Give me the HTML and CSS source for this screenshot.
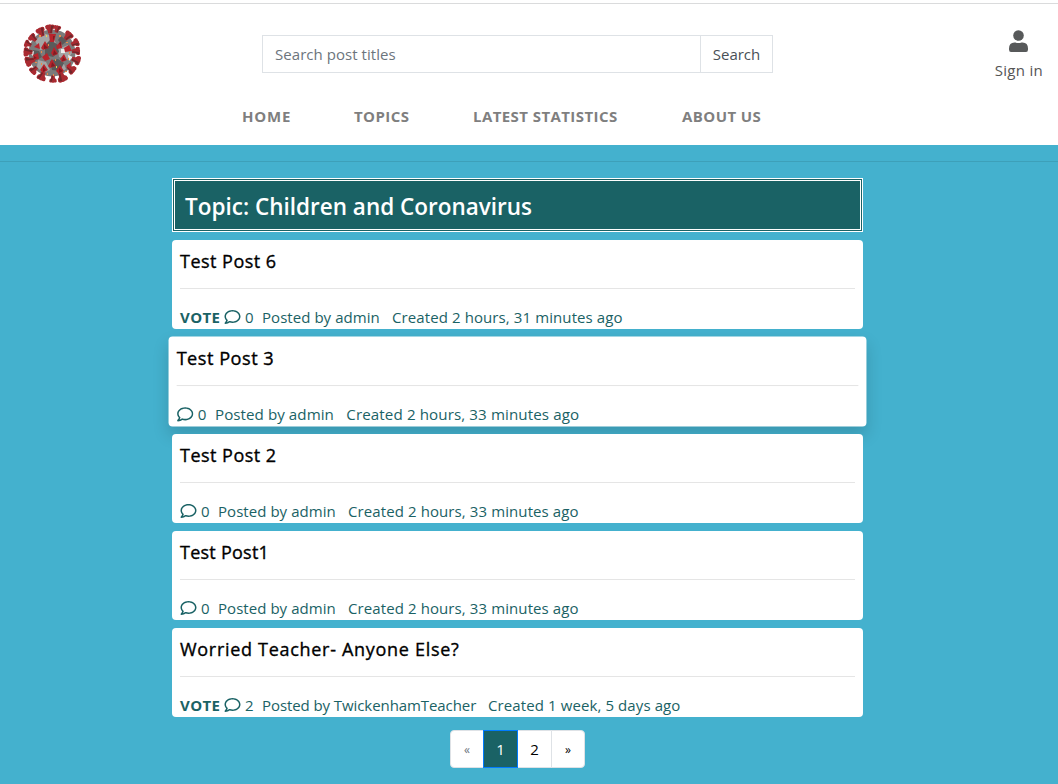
FILE: index.html
```html
<!DOCTYPE html>
<html lang="en">
<head>
<meta charset="utf-8">
<title>Topic: Children and Coronavirus</title>
<link rel="stylesheet" href="styles.css">
</head>
<body>
<svg class="defs" width="0" height="0">
  <symbol id="comment" viewBox="0 0 512 512"><path fill="currentColor" d="M256 32C114.600 32 0 125.100 0 240c0 47.600 19.900 91.200 52.900 126.300C38 405.700 7 439.100 6.500 439.500c-6.600 7-8.400 17.200-4.600 26S14.400 480 24 480c61.500 0 110-25.700 139.100-46.300C192 442.800 223.200 448 256 448c141.400 0 256-93.100 256-208S397.400 32 256 32zm0 368c-26.700 0-53.100-4.100-78.400-12.100l-22.700-7.200-19.500 13.800c-14.300 10.100-33.900 21.400-57.500 29 7.300-12.100 14.400-25.700 19.900-40.200l10.600-28.100-20.600-21.800C69.700 314.100 48 282.200 48 240c0-88.200 93.300-160 208-160s208 71.800 208 160-93.300 160-208 160z"/></symbol>
  <symbol id="spike" viewBox="-5 -5 10 10"><path fill="#a92a31" d="M-4.800-3Q-3.500-5-1.500-4.300 0-5 1.500-4.300 3.500-5 4.800-3L4.300-.5 2.500 1 2 4.500H-2L-2.500 1-4.300-.5z"/><path fill="#70272b" d="M1.300-3.500 4.200-2.800 2.200 0 1.500 4H0z"/></symbol>
</svg>
<header class="site-header">
  <div class="topbar">
    <svg class="logo" viewBox="0 0 60 60">
      <circle cx="30" cy="30" r="23.500" fill="#7b7b7b"/>
      <path fill="#a5a5a5" d="M13 18l8-8 9 3 5 9-8 4-9 1zM36 26l10-4 4 8-5 7-8-3zM16 37l8 2 4 8-7 3-6-6zM34 44l8-3 2 5-6 4z"/>
      <path fill="#5a5a5a" d="M23 22l5-5 7 4 2 8-6 5-8-2zM11 27l6 1 3 6-7 4zM28 38l8-2 6 4-4 8-8-1zM39 13l6 5-5 4-4-5z"/>
      <path fill="#ececec" d="M39 26h4v4h-4zM8 30l4-2-1 5zM46 32l5 2-4 4z"/>
      <g>
        <use href="#spike" x="-5" y="-5" width="10" height="10" transform="translate(28 6) rotate(-3)"/>
        <use href="#spike" x="-4" y="-4" width="8" height="8" transform="translate(35 6) rotate(12)"/>
        <use href="#spike" x="-5" y="-5" width="10" height="10" transform="translate(19 9) rotate(-25)"/>
        <use href="#spike" x="-4.500" y="-4.500" width="9" height="9" transform="translate(11 15) rotate(-50)"/>
        <use href="#spike" x="-4" y="-4" width="8" height="8" transform="translate(6 21) rotate(-68)"/>
        <use href="#spike" x="-5" y="-5" width="10" height="10" transform="translate(6 29) rotate(-87)"/>
        <use href="#spike" x="-5.500" y="-5.500" width="11" height="11" transform="translate(8 38) rotate(-108)"/>
        <use href="#spike" x="-4.500" y="-4.500" width="9" height="9" transform="translate(12 47) rotate(-135)"/>
        <use href="#spike" x="-5" y="-5" width="10" height="10" transform="translate(20 53) rotate(-157)"/>
        <use href="#spike" x="-4" y="-4" width="8" height="8" transform="translate(31 56) rotate(180)"/>
        <use href="#spike" x="-5.500" y="-5.500" width="11" height="11" transform="translate(40 54) rotate(158)"/>
        <use href="#spike" x="-5" y="-5" width="10" height="10" transform="translate(49 46) rotate(130)"/>
        <use href="#spike" x="-5" y="-5" width="10" height="10" transform="translate(54 37) rotate(108)"/>
        <use href="#spike" x="-4.500" y="-4.500" width="9" height="9" transform="translate(54 28) rotate(87)"/>
        <use href="#spike" x="-4.500" y="-4.500" width="9" height="9" transform="translate(53 20) rotate(65)"/>
        <use href="#spike" x="-5" y="-5" width="10" height="10" transform="translate(46 13) rotate(42)"/>
      </g>
      <g fill="#b8242c">
        <path d="M27 11h7l-2 8h-4zM34 23l5-5 1 7-5 1zM19 25l4-7 4 7-6 2zM42 25l5-3 3 6-7 1zM29 30l3-6 4 7-5 2zM20 34l5-4 3 6-5 2zM38 36l4-5 3 6-5 2zM26 43l4-7 4 7-6 2zM34 48l4-6 4 6-5 3zM18 47l4-6 4 6-5 3zM11 32l5-2 1 6-5 1zM12 24l5-4 1 6zM44 43l5-4-1 7z"/>
      </g>
      <g fill="#7d1d23"><path d="M31 13h2l-2 5zM37 20l2-1v5zM22 21l4 4-4 1zM32 27l3 4-4 1zM41 34l3 3-4 1zM30 39l3 4-4 1zM37 45l4 3-4 2zM21 43l3 4-3 2zM12 33l3 2-3 1z"/></g>
      <g fill="#ef8a45"><path d="M17 12h2v2h-2zM37 12h2v2h-2zM26 21h1v2h-1zM19 28h1v2h-1zM44 19h2v1h-2zM47 29h1v2h-1zM13 39h2v1h-2zM25 50h1v2h-1zM33 36h1v2h-1zM46 35h1v2h-1zM43 48h2v1h-2zM19 40h1v2h-1zM31 51h1v2h-1z"/></g>
      <path fill="#ecd34f" d="M24 12h1v2h-1zM34 43h1v2h-1z"/>
    </svg>
    <form class="search">
      <input class="search-input" type="text" placeholder="Search post titles">
      <button class="search-button" type="button">Search</button>
    </form>
    <a class="sign-in">
      <svg class="user-icon" viewBox="0 0 19 22"><circle cx="9.500" cy="5.500" r="5.300"/><path d="M0 19.500V18.500Q0 12.500 5.500 12.500H6.500Q9.500 13.700 12.500 12.500H13.500Q19 12.500 19 18.500V19.500Q19 22 17 22H2Q0 22 0 19.500z"/></svg>
      <span class="sign-label">Sign in</span>
    </a>
  </div>
  <nav class="nav">
    <a class="nav-home">HOME</a><a class="nav-topics">TOPICS</a><a class="nav-stats">LATEST STATISTICS</a><a class="nav-about">ABOUT US</a>
  </nav>
</header>
<hr class="divider">
<main class="content">
  <h1 class="topic"><span class="topic-text">Topic: Children and Coronavirus</span></h1>
  <article class="post">
    <h2 class="post-title">Test Post 6</h2>
    <div class="meta"><b class="vote">VOTE</b><svg class="comment"><use href="#comment"/></svg><span class="count">0</span><span class="author">Posted by admin</span><span class="created">Created 2 hours, 31 minutes ago</span></div>
  </article>
  <article class="post raised">
    <h2 class="post-title">Test Post 3</h2>
    <div class="meta"><svg class="comment"><use href="#comment"/></svg><span class="count">0</span><span class="author">Posted by admin</span><span class="created">Created 2 hours, 33 minutes ago</span></div>
  </article>
  <article class="post">
    <h2 class="post-title">Test Post 2</h2>
    <div class="meta"><svg class="comment"><use href="#comment"/></svg><span class="count">0</span><span class="author">Posted by admin</span><span class="created">Created 2 hours, 33 minutes ago</span></div>
  </article>
  <article class="post">
    <h2 class="post-title title-tight">Test Post1</h2>
    <div class="meta"><svg class="comment"><use href="#comment"/></svg><span class="count">0</span><span class="author">Posted by admin</span><span class="created">Created 2 hours, 33 minutes ago</span></div>
  </article>
  <article class="post">
    <h2 class="post-title title-long">Worried Teacher- Anyone Else?</h2>
    <div class="meta"><b class="vote">VOTE</b><svg class="comment"><use href="#comment"/></svg><span class="count">2</span><span class="author author-long">Posted by TwickenhamTeacher</span><span class="created">Created 1 week, 5 days ago</span></div>
  </article>
  <nav class="pagination">
    <a class="page edge disabled">«</a><a class="page active">1</a><a class="page">2</a><a class="page edge">»</a>
  </nav>
</main>
</body>
</html>
```
FILE: styles.css
```css
* { box-sizing: border-box; }
body {
  margin: 0;
  min-height: 784px;
  overflow: hidden;
  background: #44b1ce;
  font-family: "Open Sans", "Noto Sans", sans-serif;
  font-size: 15px;
  line-height: 24px;
  color: #1a6265;
}
.defs { display: block; position: absolute; }
.site-header { height: 145px; padding-top: 3px; background: #fff; }
.topbar {
  display: flex;
  height: 97px;
  padding: 0 15px 0 22px;
  border-top: 1px solid #dadbdc;
}
.logo { width: 60px; height: 60px; margin-top: 19px; }
.search { display: flex; width: 511px; height: 38px; margin: 31px 0 0 180px; }
.search-input, .search-button {
  border: 1px solid #dee2e6;
  background: #fff;
  font: inherit;
  height: 38px;
  margin: 0;
  border-radius: 0;
}
.search-input { width: 439px; padding: 0 12px; letter-spacing: .05px; }
.search-input::placeholder { color: #6c757d; opacity: 1; }
.search-button { width: 73px; margin-left: -1px; padding: 0; color: #495057; }
.sign-in {
  display: flex;
  flex-direction: column;
  align-items: center;
  margin: 26px 0 0 auto;
  color: #555;
}
.user-icon { width: 19px; height: 22px; fill: #57595a; }
.sign-label { margin-top: 6px; white-space: nowrap; letter-spacing: .3px; }
.nav {
  display: flex;
  padding: 4px 0 0 242px;
  font-weight: 700;
  color: #7f7f7f;
  white-space: nowrap;
  letter-spacing: .42px;
}
.nav-home { width: 112px; letter-spacing: .8px; }
.nav-topics { width: 119px; }
.nav-stats { width: 209px; }
.divider { height: 1px; margin: 16px 0; border: 0; background: #3da0b9; }
.content { width: 691px; margin-left: 172px; }
.topic {
  height: 54px;
  margin: 0 0 8px;
  padding: 11px 10px 0;
  border: 3px double #fff;
  background: #1a6265;
  color: #fff;
  font-size: 22.5px;
  font-weight: 600;
  line-height: 29px;
}
.post {
  position: relative;
  height: 89px;
  margin-bottom: 8px;
  padding: 8px 8px 0;
  border-radius: 4px;
  background: #fff;
}
.raised { transform: scale(1.01); box-shadow: 0 8px 16px rgba(0, 0, 0, .15); }
.post-title {
  height: 41px;
  margin: 0 0 16px;
  border-bottom: 1px solid #e5e5e5;
  color: #000;
  font-size: 18px;
  font-weight: 500;
  line-height: 26px;
  letter-spacing: .48px;
  -webkit-text-stroke: .35px #000;
}
.title-tight { letter-spacing: .25px; }
.title-long { letter-spacing: .7px; }
.meta { display: flex; white-space: nowrap; }
.vote { width: 44px; letter-spacing: .4px; }
.comment { width: 17px; height: 16px; margin: 4px 4px 0 0; color: #1a6265; }
.count { width: 17px; }
.author { width: 130px; letter-spacing: .05px; }
.author-long { width: 226px; letter-spacing: -.08px; }
.created { letter-spacing: .1px; }
.pagination { display: flex; margin: 13px 0 0 278px; }
.page {
  width: 35px;
  height: 38px;
  margin-right: -1px;
  border: 1px solid #dee2e6;
  background: #fff;
  color: #000;
  line-height: 37px;
  text-align: center;
}
.page:first-child { border-radius: 4px 0 0 4px; }
.page:last-child { border-radius: 0 4px 4px 0; }
.edge { width: 34px; font-size: 12px; }
.disabled { color: #6c757d; }
.active { position: relative; border-color: #007bff; background: #1a6265; color: #fff; }
```
